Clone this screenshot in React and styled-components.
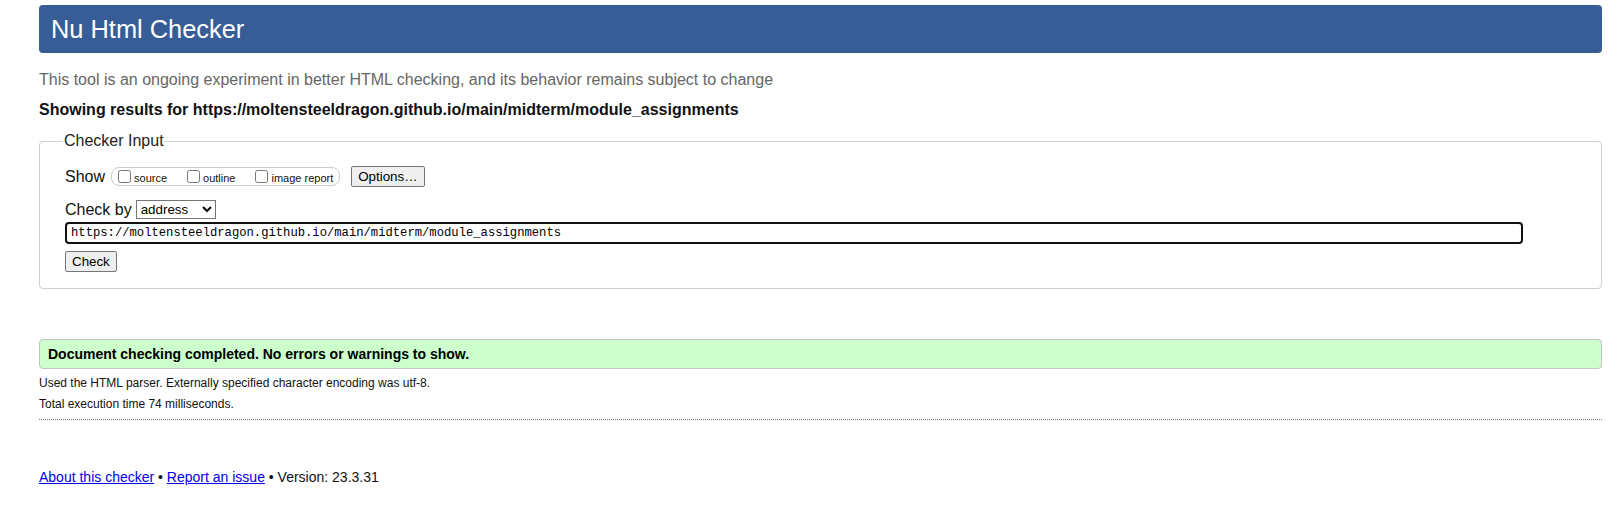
import React from "react";
import styled, { createGlobalStyle } from "styled-components";

const GlobalStyle = createGlobalStyle`
  html, body {
    margin: 0;
    padding: 0;
    background: #fff;
  }
  body {
    font-family: "Liberation Sans", Arial, sans-serif;
    color: #111;
  }
`;

const Page = styled.div`
  padding: 5px 16px 40px 39px;
`;

const Header = styled.h1`
  margin: 0;
  height: 48px;
  display: flex;
  align-items: center;
  padding: 0 12px;
  background: #365d95;
  color: #fff;
  font-size: 25.4px;
  font-weight: normal;
  border-radius: 4px;
`;

const Intro = styled.p`
  margin: 18px 0 0;
  font-size: 16px;
  color: #666;
`;

const Results = styled.p`
  margin: 12px 0 0;
  font-size: 16px;
  font-weight: bold;
  color: #111;
`;

const Fieldset = styled.fieldset`
  margin: 13px 0 0;
  padding: 16px 24px 16px 25px;
  border: 1px solid #cfcfcf;
  border-radius: 4px;
  min-width: 0;
`;

const Legend = styled.legend`
  padding: 0 1px;
  margin-left: -2px;
  font-size: 16px;
  color: #222;
`;

const Row = styled.div`
  display: flex;
  align-items: center;
  gap: ${({ $gap }) => $gap || 6}px;
  margin-bottom: ${({ $mb }) => $mb || 0}px;
  font-size: 16px;
`;

const OptionGroup = styled.div`
  display: flex;
  align-items: center;
  height: 17px;
  padding: 0 6px 0 6px;
  border: 1px solid #ccc;
  border-radius: 8px;
  margin-right: 5px;
`;

const OptionItem = styled.label`
  display: flex;
  align-items: center;
  gap: 3px;
  font-size: 11px;
  margin-right: ${({ $last }) => ($last ? 0 : 20)}px;
  input {
    margin: 0;
    width: 13px;
    height: 13px;
  }
  span {
    padding-top: 3px;
  }
`;

const NativeButton = styled.button`
  font-family: "Liberation Sans", Arial, sans-serif;
  font-size: 13.33px;
  height: 21px;
  padding: 0 ${({ $pad }) => $pad || 6}px;
  background: #efefef;
  border: 1px solid #767676;
  border-radius: 2px;
  color: #000;
`;

const Select = styled.select`
  font-family: "Liberation Sans", Arial, sans-serif;
  font-size: 13.33px;
  width: 80px;
  height: 19px;
  border: 1px solid #767676;
  border-radius: 0;
  background: #fff;
  color: #000;
`;

const UrlInput = styled.input`
  display: block;
  box-sizing: border-box;
  width: 1458px;
  height: 22px;
  margin: 3px 0 7px;
  padding: 0 4px;
  border: 2px solid #111;
  border-radius: 4px;
  font-family: "Liberation Mono", "DejaVu Sans Mono", monospace;
  font-size: 12.2px;
  color: #000;
  outline: none;
`;

const Success = styled.div`
  margin-top: 50px;
  height: 28px;
  display: flex;
  align-items: center;
  padding: 0 8px;
  background: #ccffcc;
  border: 1px solid #c4c4c4;
  border-radius: 4px;
  font-size: 14px;
  font-weight: bold;
  color: #000;
`;

const Details = styled.div`
  margin-top: 7px;
  padding-bottom: 8px;
  border-bottom: 1px dotted #777;
`;

const Note = styled.p`
  margin: 0 0 7px;
  font-size: 12px;
  line-height: 14px;
  color: #111;

  &:last-child {
    margin-bottom: 0;
  }
`;

const Footer = styled.p`
  margin: 49px 0 0;
  font-size: 14px;
  color: #111;
  a {
    color: #0000ee;
  }
`;

const options = ["source", "outline", "image report"];

const url = "https://moltensteeldragon.github.io/main/midterm/module_assignments";

export default function App() {
  return (
    <Page>
      <GlobalStyle />
      <Header>Nu Html Checker</Header>
      <Intro>
        This tool is an ongoing experiment in better HTML checking, and its behavior remains subject
        to change
      </Intro>
      <Results>Showing results for {url}</Results>

      <Fieldset>
        <Legend>Checker Input</Legend>
        <Row $mb={13}>
          <span>Show</span>
          <OptionGroup>
            {options.map((o, i) => (
              <OptionItem key={o} $last={i === options.length - 1}>
                <input type="checkbox" />
                <span>{o}</span>
              </OptionItem>
            ))}
          </OptionGroup>
          <NativeButton $pad={6}>Options…</NativeButton>
        </Row>
        <Row $gap={4}>
          <span>Check by</span>
          <Select defaultValue="address">
            <option value="address">address</option>
            <option value="file">file upload</option>
            <option value="text">text input</option>
          </Select>
        </Row>
        <UrlInput type="url" defaultValue={url} readOnly />
        <NativeButton $pad={6}>Check</NativeButton>
      </Fieldset>

      <Success>Document checking completed. No errors or warnings to show.</Success>
      <Details>
        <Note>Used the HTML parser. Externally specified character encoding was utf-8.</Note>
        <Note>Total execution time 74 milliseconds.</Note>
      </Details>

      <Footer>
        <a href="#about">About this checker</a> • <a href="#issue">Report an issue</a> • Version:
        23.3.31
      </Footer>
    </Page>
  );
}
